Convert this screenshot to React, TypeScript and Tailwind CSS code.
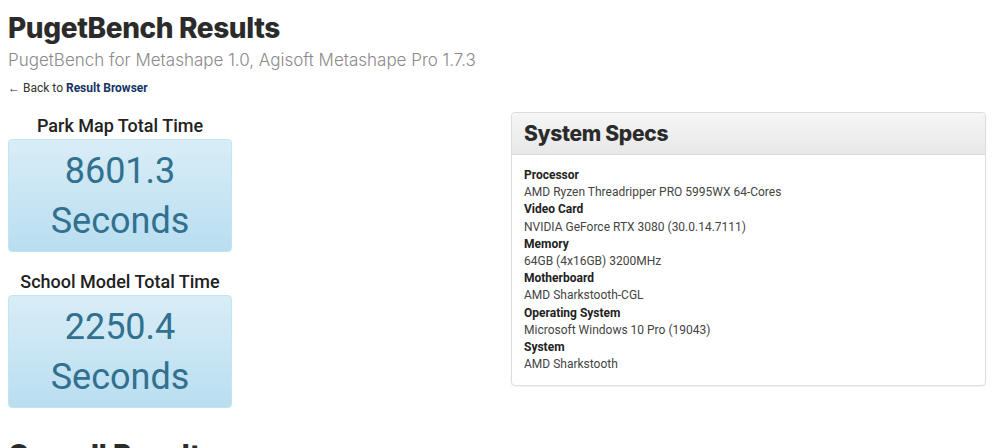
const specs: [string, string][] = [
  ["Processor", "AMD Ryzen Threadripper PRO 5995WX 64-Cores"],
  ["Video Card", "NVIDIA GeForce RTX 3080 (30.0.14.7111)"],
  ["Memory", "64GB (4x16GB) 3200MHz"],
  ["Motherboard", "AMD Sharkstooth-CGL"],
  ["Operating System", "Microsoft Windows 10 Pro (19043)"],
  ["System", "AMD Sharkstooth"],
];

const results = [
  { title: "Park Map Total Time", value: "8601.3" },
  { title: "School Model Total Time", value: "2250.4" },
];

function ResultBox({ title, value }: { title: string; value: string }) {
  return (
    <div className="w-[224px]">
      <h3 className="text-center text-[18px] leading-[24px] font-medium text-[#222]">{title}</h3>
      <div className="mt-[1px] rounded-[4px] border border-[#bce8f1] bg-gradient-to-b from-[#d9edf7] to-[#b9def0] pt-[6px] pb-[5px] text-center text-[36px] leading-[50px] text-[#31708f]">
        <div>{value}</div>
        <div>Seconds</div>
      </div>
    </div>
  );
}

export default function App() {
  return (
    <div className="h-[448px] overflow-hidden bg-white px-[8px] font-['Roboto','Liberation_Sans',sans-serif] text-[#333]">
      <h1 className="pt-[10px] font-['Inter','Open_Sans',sans-serif] text-[28px] leading-[36px] font-extrabold tracking-[-0.4px] text-[#2b2b2b]">
        PugetBench Results
      </h1>
      <p className="mt-[2px] font-['Inter','Open_Sans',sans-serif] text-[17px] leading-[24px] font-light text-[#8a8a8a]">
        PugetBench for Metashape 1.0, Agisoft Metashape Pro 1.7.3
      </p>
      <p className="mt-[8px] text-[12px] leading-[16px] text-[#333]">
        ← Back to <a className="font-bold text-[#173466]">Result Browser</a>
      </p>

      <div className="mt-[18px] flex">
        <div className="flex w-[503px] flex-col gap-[18px]">
          {results.map((r) => (
            <ResultBox key={r.title} title={r.title} value={r.value} />
          ))}
        </div>

        <div className="mt-[-2px] w-[475px] self-start rounded-[4px] border border-[#ddd] shadow-[0_1px_2px_rgba(0,0,0,0.06)]">
          <div className="flex h-[42px] items-center rounded-t-[4px] border-b border-[#ddd] bg-gradient-to-b from-[#f6f6f6] to-[#e8e8e8] px-[12px]">
            <h2 className="font-['Inter','Open_Sans',sans-serif] text-[21px] font-extrabold tracking-[-0.3px] text-[#2b2b2b]">System Specs</h2>
          </div>
          <div className="px-[12px] pt-[12px] pb-[12px] text-[12px] leading-[17.2px]">
            {specs.map(([label, value]) => (
              <div key={label}>
                <div className="font-bold text-[#222]">{label}</div>
                <div className="text-[#444]">{value}</div>
              </div>
            ))}
          </div>
        </div>
      </div>

      <h2 className="mt-[29px] font-['Inter','Open_Sans',sans-serif] text-[28px] leading-[36px] font-extrabold text-[#2b2b2b]">
        Overall Results
      </h2>
    </div>
  );
}
